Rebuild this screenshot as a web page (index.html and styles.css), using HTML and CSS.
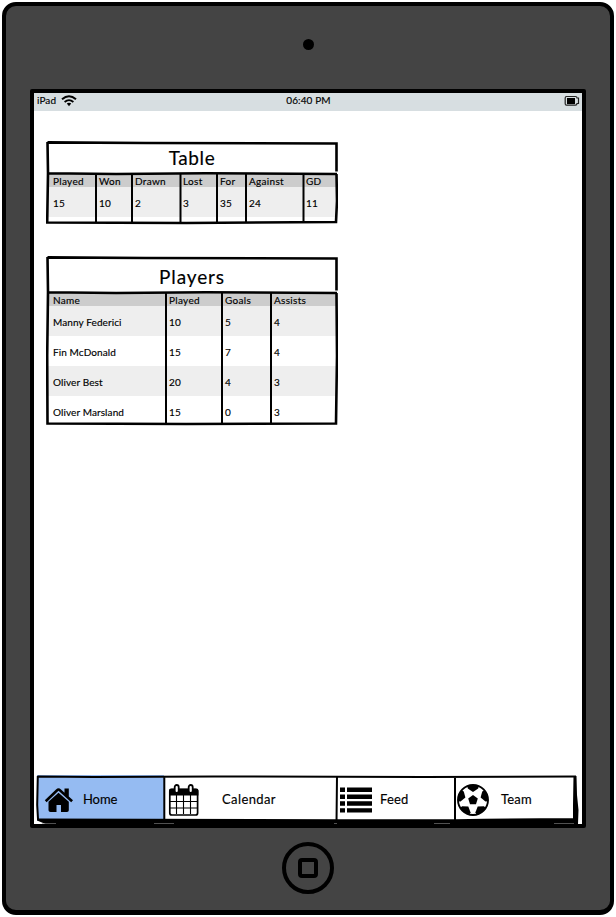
FILE: index.html
```html
<!DOCTYPE html>
<html lang="en">
<head>
<meta charset="utf-8">
<title>Team home</title>
<link rel="stylesheet" href="styles.css">
</head>
<body>
<div class="device">
  <div class="bezel-top"><span class="camera"></span></div>
  <div class="screen">
    <header class="status">
      <div class="carrier"><span>iPad</span>
        <svg width="16" height="12" viewBox="0 0 16 12" fill="none" stroke="#000"><path d="M1 4.2Q8-1.8 15 4.2" stroke-width="2"/><path d="M3.6 7Q8 3.2 12.4 7" stroke-width="1.8"/><path d="M5.8 8.6Q8 7 10.2 8.6L8 11.3Z" fill="#000" stroke="none"/></svg>
      </div>
      <time>06:40 PM</time>
      <svg class="battery" width="16" height="12" viewBox="0 0 16 12"><path d="M2.5 1.5H11.5Q13 1.5 13 3H14.5V8.5H13Q13 10.2 11.5 10.2H2.5Q1.2 10.2 1.2 8.8V3Q1.2 1.5 2.5 1.5Z" fill="none" stroke="#222" stroke-width="1.2"/><path d="M3 3H11V9H3Z"/></svg>
    </header>
    <main>
      <section class="card standings">
        <h2>Table</h2>
        <div class="grid head"><span>Played</span><span>Won</span><span>Drawn</span><span>Lost</span><span>For</span><span>Against</span><span>GD</span></div>
        <div class="grid row shade"><span>15</span><span>10</span><span>2</span><span>3</span><span>35</span><span>24</span><span>11</span></div>
        <svg class="ink" width="292" height="84" viewBox="0 0 292 84"><path d="M1.5 1.4L100 2L290.5 2.5V30.5M1.5 1L2 32L1.2 81.5L140 82L290 81L291 60L290.5 33M1 32.2L70 33L160 32.3L291 33"/><path class="rule" d="M50 33V82M86 33V82M134.5 33V81M171 33V81M200 33V81M257.5 33V81"/></svg>
      </section>
      <section class="card players">
        <h2>Players</h2>
        <div class="grid head"><span>Name</span><span>Played</span><span>Goals</span><span>Assists</span></div>
        <div class="grid row shade"><span>Manny Federici</span><span>10</span><span>5</span><span>4</span></div>
        <div class="grid row"><span>Fin McDonald</span><span>15</span><span>7</span><span>4</span></div>
        <div class="grid row shade"><span>Oliver Best</span><span>20</span><span>4</span><span>3</span></div>
        <div class="grid row"><span>Oliver Marsland</span><span>15</span><span>0</span><span>3</span></div>
        <svg class="ink" width="292" height="170" viewBox="0 0 292 170"><path d="M1.5 1.4L100 2L290.5 2.5V34.5M1.5 1L2 36L1.2 100L1.5 167.5L140 168L290 167.5L291 100L290.5 37M1 36.2L70 37L160 36.3L291 37"/><path class="rule" d="M120 36V168M176 36V167M225 36V167"/></svg>
      </section>
    </main>
    <nav>
      <a class="home"><svg width="30" height="26" viewBox="0 0 30 26"><path d="M.8 13.2L12 2.4Q14.5 0 17 2.4L20.5 5.7V1.5H24.8V9.6L29 13.2L27.2 15.2L14.5 3.8L2.6 15.2Z"/><path d="M4.5 14.7L14.5 5.8L24.8 14.7V23.2Q24.8 25 23 25H17V18H12.5V25H6.5Q4.5 25 4.5 23.2Z"/></svg><span>Home</span></a>
      <a class="calendar"><svg width="32" height="34" viewBox="0 0 32 34"><rect x="1.8" y="6.5" width="27.8" height="25.5" rx="2" fill="#fff" stroke="#000" stroke-width="1.7"/><path d="M1 12.4V7.5Q1 5.5 3 5.5H28.5Q30.4 5.5 30.4 7.5V12.4Z"/><path d="M8.5 12V31M15.5 12V31M22.5 12V31M2 18.5H30M2 25H30" stroke="#000" stroke-width="1.1"/><rect x="6.7" y="2" width="4" height="8" rx="2" fill="#fff" stroke="#000" stroke-width="1.8"/><rect x="20.7" y="2" width="4" height="8" rx="2" fill="#fff" stroke="#000" stroke-width="1.8"/></svg><span>Calendar</span></a>
      <a class="feed"><svg width="33" height="26" viewBox="0 0 33 26"><path d="M0 .5H5V5H0ZM7 .5H32V5H7ZM0 7.4H5V11.9H0ZM7 7.4H32V11.9H7ZM0 14.3H5V18.8H0ZM7 14.3H32V18.8H7ZM0 21.2H5V25.5H0ZM7 21.2H32V25.5H7Z"/></svg><span>Feed</span></a>
      <a class="team"><svg width="34" height="34" viewBox="0 0 34 34"><defs><clipPath id="ball"><circle cx="17" cy="17" r="15"/></clipPath></defs><circle cx="17" cy="17" r="15" fill="#fff" stroke="#000" stroke-width="1.9"/><path d="M17 12L21.8 15.6L20 21.3H14L12.2 15.6Z"/><g clip-path="url(#ball)"><path id="patch" d="M10.5 0H23.5L22.2 5.6L17 9L11.8 5.6Z"/><use href="#patch" transform="rotate(72 17 17)"/><use href="#patch" transform="rotate(144 17 17)"/><use href="#patch" transform="rotate(216 17 17)"/><use href="#patch" transform="rotate(288 17 17)"/></g></svg><span>Team</span></a>
      <svg class="ink" width="548" height="50" viewBox="0 0 548 50"><path d="M3.5 1.6L60 2L180 1.5L390 2L542 1.6M3.8 1L3.2 30L4 44M130.3 1V45M303 1L302.5 48M421 1V49" class="rule"/><path d="M539.5 1H542.5L543 20L544.5 35L544 49H539V30ZM3 43.5L110 43.8L303 44.2L421 44.2L450 43.8L540 43V50H14L3 45.5Z" class="solid"/><path d="M8 48.5H22M120 48.5H140M300 48.5H303M400 48.5H416M520 48.5H540" class="glint"/></svg>
    </nav>
  </div>
  <div class="bezel-bottom"><span class="button"><i></i></span></div>
</div>
</body>
</html>
```
FILE: styles.css
```css
* { box-sizing: border-box; }
body { margin: 0; background: #fff; font: 10px/14px Lato, "Liberation Sans", sans-serif; color: #000; -webkit-text-stroke: .15px #000; }
svg { display: block; flex: none; }
.device { width: 612px; height: 913px; margin: 2px; border: 4px solid #000; border-bottom-width: 5px; border-radius: 14px; background: #444; display: flex; flex-direction: column; align-items: center; }
.bezel-top { height: 83px; display: flex; align-items: center; }
.camera { width: 11px; height: 11px; border-radius: 50%; background: #000; margin: 0 0 6px 0; }
.screen { width: 556px; height: 739px; border: 4px solid #000; border-radius: 2px; background: #fff; display: flex; flex-direction: column; }
.status { height: 18px; background: #d7dee1; display: grid; grid-template-columns: 1fr auto 1fr; align-items: center; padding: 0 2px 2px 3px; letter-spacing: .1px; }
.carrier { display: flex; align-items: center; gap: 5px; }
.status span, .status time { margin-top: -2px; }
.battery { justify-self: end; }
main { flex: 1; padding: 30px 0 0 12px; }
.card { width: 292px; position: relative; overflow: hidden; }
.standings { height: 84px; margin-bottom: 31px; }
.players { height: 170px; margin: 0; }
h2 { margin: 0; font-size: 19px; font-weight: 400; text-align: center; letter-spacing: .5px; }
.standings h2 { height: 33px; line-height: 33px; letter-spacing: .6px; }
.players h2 { height: 36px; line-height: 41px; letter-spacing: .9px; }
.grid { display: grid; margin: 0 2px; }
.standings .grid { grid-template-columns: 49px 36px 48px 37px 29px 57px 32px; }
.players .grid { grid-template-columns: 119px 56px 49px 64px; }
.grid span { padding-left: 2px; white-space: nowrap; }
.grid span:first-child { padding-left: 5px; }
.head { height: 13px; line-height: 15px; background: #ccc; letter-spacing: .3px; }
.players .head { height: 14px; line-height: 16px; }
.row { height: 30px; line-height: 33px; letter-spacing: .1px; }
.shade { background: #eee; }
.ink { position: absolute; left: 0; top: 0; pointer-events: none; fill: none; stroke: #000; stroke-width: 2.6; }
.ink .rule { stroke-width: 2; }
.ink .solid { fill: #000; stroke: none; }
.ink .glint { stroke: #888; stroke-width: .6; }
nav { height: 49px; position: relative; display: grid; grid-template-columns: 127px 173px 118px 122px; padding-left: 3px; font-size: 13px; }
nav a { display: flex; align-items: center; height: 46px; padding-top: 1px; letter-spacing: .2px; }
nav a svg { margin-top: 2px; }
.home { background: #95bbf2; padding-left: 7px; gap: 9px; letter-spacing: -.1px; }
.calendar { padding-left: 4px; gap: 22px; letter-spacing: .4px; }
.feed { padding-left: 3px; gap: 7px; }
.team { padding-left: 1px; gap: 11px; }
.bezel-bottom { flex: 1; display: flex; align-items: center; }
.button { width: 52px; height: 52px; border: 4px solid #000; border-radius: 50%; display: grid; place-items: center; margin-bottom: 3px; }
.button i { width: 20px; height: 20px; border: 4px solid #000; border-radius: 4px; }
```
